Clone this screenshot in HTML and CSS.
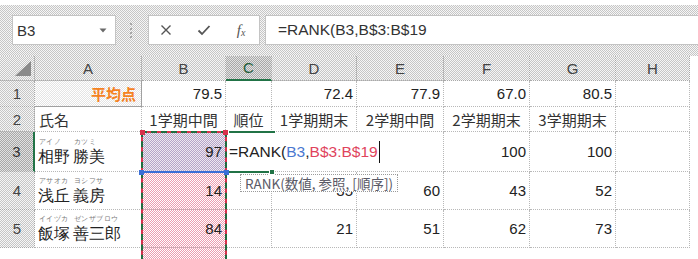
FILE: index.html
```html
<!DOCTYPE html>
<html lang="ja">
<head>
<meta charset="utf-8">
<title>RANK</title>
<link rel="stylesheet" href="styles.css">
</head>
<body>
<div class="toolbar">
  <div class="namebox"><span>B3</span><svg class="dd" width="8" height="5" viewBox="0 0 8 5"><path d="M0.5 0.5 L7.5 0.5 L4 4.5 Z" fill="#6a6a6a"/></svg></div>
  <div class="grip"></div>
  <div class="fxbtns">
    <span class="slot s1"><svg width="12" height="12" viewBox="0 0 12 12"><path d="M1.5 1.5 L10.5 10.5 M10.5 1.5 L1.5 10.5" stroke="#555" stroke-width="1.4" fill="none"/></svg></span>
    <span class="slot s2"><svg width="14" height="12" viewBox="0 0 14 12"><path d="M1.5 6.5 L5 10 L12.5 2" stroke="#555" stroke-width="1.8" fill="none"/></svg></span>
    <span class="slot s3"><span class="fx">f<sub>x</sub></span></span>
  </div>
  <div class="formula">=RANK(B3,B$3:B$19</div>
</div>

<div class="grid">
  <div class="hd corner"><svg width="18" height="16" viewBox="0 0 18 16"><path d="M17 0 L17 15 L1 15 Z" fill="#8a8a8a"/></svg></div>
  <div class="hd col">A</div>
  <div class="hd col">B</div>
  <div class="hd col sel-col">C</div>
  <div class="hd col">D</div>
  <div class="hd col">E</div>
  <div class="hd col">F</div>
  <div class="hd col">G</div>
  <div class="hd col">H</div>

  <div class="hd row">1</div>
  <div class="c num avg">平均点</div>
  <div class="c num">79.5</div>
  <div class="c"></div>
  <div class="c num">72.4</div>
  <div class="c num">77.9</div>
  <div class="c num">67.0</div>
  <div class="c num">80.5</div>
  <div class="c"></div>

  <div class="hd row">2</div>
  <div class="c jp">氏名</div>
  <div class="c jp ctr">1学期中間</div>
  <div class="c jp ctr">順位</div>
  <div class="c jp ctr">1学期期末</div>
  <div class="c jp ctr">2学期中間</div>
  <div class="c jp ctr">2学期期末</div>
  <div class="c jp ctr">3学期期末</div>
  <div class="c"></div>

  <div class="hd row sel-row">3</div>
  <div class="c name"><div class="part fam"><span class="kana">アイノ</span><span class="kanji">相野</span></div><div class="part"><span class="kana">カツミ</span><span class="kanji">勝美</span></div></div>
  <div class="c num b3">97</div>
  <div class="edit"><span class="ftxt">=RANK(<span class="ref-b">B3</span>,<span class="ref-r">B$3:B$19</span></span><span class="caret"></span><div class="tip">RANK(数値, 参照, [順序])</div></div>
  <div class="c num">100</div>
  <div class="c num">100</div>
  <div class="c"></div>

  <div class="hd row">4</div>
  <div class="c name"><div class="part fam"><span class="kana">アサオカ</span><span class="kanji">浅丘</span></div><div class="part"><span class="kana">ヨシフサ</span><span class="kanji">義房</span></div></div>
  <div class="c num pink b4">14</div>
  <div class="c"></div>
  <div class="c num">35</div>
  <div class="c num">60</div>
  <div class="c num">43</div>
  <div class="c num">52</div>
  <div class="c"></div>

  <div class="hd row">5</div>
  <div class="c name"><div class="part fam"><span class="kana">イイヅカ</span><span class="kanji">飯塚</span></div><div class="part"><span class="kana">ゼンザブロウ</span><span class="kanji">善三郎</span></div></div>
  <div class="c num pink b5">84</div>
  <div class="c"></div>
  <div class="c num">21</div>
  <div class="c num">51</div>
  <div class="c num">62</div>
  <div class="c num">73</div>
  <div class="c"></div>

  <div class="blank"></div>
  <div class="blank"></div>
  <div class="c pink tail"></div>
  <div class="blank"></div>
  <div class="blank"></div>
  <div class="blank"></div>
  <div class="blank"></div>
  <div class="blank"></div>
  <div class="blank"></div>

  <div class="range-frame"></div>
  <div class="b3-frame"></div>
  <div class="active-frame"></div>
</div>
</body>
</html>
```

FILE: styles.css
```css
body {
  margin: 0;
  width: 698px;
  height: 259px;
  overflow: hidden;
  background: #fff;
  font-family: "Noto Sans CJK JP", sans-serif;
  color: #222;
}

.toolbar {
  margin-top: 5px;
  height: 51px;
  box-sizing: border-box;
  padding-top: 10px;
  display: flex;
  align-items: flex-start;
  background: repeating-conic-gradient(#c6c6c6 0 25%, #f6f6f6 0 50%) 0 0 / 2px 2px;
}

.namebox {
  margin-left: 12px;
  width: 104px;
  height: 30px;
  box-sizing: border-box;
  background: #fff;
  border: 1px solid #c4c4c4;
  display: flex;
  align-items: center;
  justify-content: space-between;
  padding: 0 8px 0 4px;
  font: 15px "Liberation Sans", sans-serif;
  color: #333;
}

.grip {
  margin: 8px 16px 0 14px;
  width: 0;
  height: 15px;
  border-left: 2px dotted #a8a8a8;
}

.fxbtns {
  width: 112px;
  height: 30px;
  box-sizing: border-box;
  background: #fff;
  border: 1px solid #c4c4c4;
  display: flex;
  align-items: center;
}

.slot {
  display: flex;
  align-items: center;
  justify-content: center;
  height: 100%;
}
.s1 { width: 35px; }
.s2 { width: 40px; }
.s3 { width: 36px; }

.fx {
  font: italic 15px "Liberation Serif", serif;
  color: #555;
}
.fx sub {
  font-size: 10px;
  vertical-align: -1px;
}

.formula {
  margin-left: 5px;
  flex: 1;
  height: 30px;
  box-sizing: border-box;
  background: #fff;
  border: 1px solid #c4c4c4;
  border-right: none;
  display: flex;
  align-items: center;
  padding-left: 12px;
  font: 15.5px "Liberation Sans", sans-serif;
  color: #333;
}

.grid {
  width: 690px;
  display: grid;
  grid-template-columns: 35px 107px 84px 46px 85px 87px 86px 86px 74px;
  grid-template-rows: 25px 26px 25px 40px 38px 38px 11px;
}

.hd {
  box-sizing: border-box;
  background: repeating-conic-gradient(#c6c6c6 0 25%, #f6f6f6 0 50%) 0 0 / 2px 2px;
  border-right: 1px dotted #a8a8a8;
  border-bottom: 1px dotted #a8a8a8;
  display: flex;
  align-items: center;
  justify-content: center;
  font: 15px "Liberation Sans", sans-serif;
  color: #444;
}

.corner {
  align-items: flex-end;
  justify-content: flex-end;
  padding: 0 2px 3px 0;
}

.sel-col {
  background: repeating-conic-gradient(#a8a8a8 0 25%, #e2e2e2 0 50%) 0 0 / 2px 2px;
  border-bottom: 2px solid #217346;
  color: #1f5e3a;
}
.sel-row {
  background: repeating-conic-gradient(#a8a8a8 0 25%, #e2e2e2 0 50%) 0 0 / 2px 2px;
  border-right: 2px solid #217346;
  color: #333;
}

.c {
  box-sizing: border-box;
  border-right: 1px dotted #b8b8b8;
  border-bottom: 1px dotted #b8b8b8;
  display: flex;
  align-items: center;
  padding: 0 3px 0 4px;
  font: 15px "Liberation Sans", sans-serif;
  color: #222;
  white-space: nowrap;
}
.num { justify-content: flex-end; }
.jp { font: 15px "Noto Sans CJK JP", sans-serif; color: #333; }
.ctr { justify-content: center; padding: 0; }

.avg {
  font: bold 15px "Noto Sans CJK JP", sans-serif;
  color: #f5821f;
  padding-right: 5px;
  background: repeating-conic-gradient(#e4e4e4 0 25%, #fff 0 50%) 0 0 / 2px 2px;
  border-right: 1px solid #a0a0a0;
  border-bottom: 1px solid #a0a0a0;
}

.name {
  gap: 4px;
  padding-left: 3px;
}
.part {
  display: flex;
  flex-direction: column;
  align-items: flex-start;
}
.fam { width: 31px; }
.kana {
  font-size: 7px;
  line-height: 10px;
  color: #7a7a7a;
  padding-left: 1px;
  letter-spacing: 0.4px;
  white-space: nowrap;
}
.kanji {
  font-size: 15.5px;
  line-height: 19px;
  color: #222;
  white-space: nowrap;
}

.pink {
  background: repeating-conic-gradient(#ec9cb0 0 25%, #fff 0 50%) 0 0 / 2px 2px;
}
.b3 {
  grid-area: 4 / 3;
  background: repeating-conic-gradient(#b4a4c8 0 25%, #efe8f0 0 50%) 0 0 / 2px 2px;
}
.b4 { grid-area: 5 / 3; }
.b5 { grid-area: 6 / 3; }
.tail { grid-area: 7 / 3; border-bottom: none; }
.blank { background: #fff; }

.edit {
  grid-column: 4 / 7;
  grid-row: 4;
  position: relative;
  z-index: 2;
  background: #fff;
  box-sizing: border-box;
  border-right: 1px dotted #b8b8b8;
  border-bottom: 1px dotted #b8b8b8;
  display: flex;
  align-items: center;
  padding-left: 3px;
  font: 15.5px "Liberation Sans", sans-serif;
  color: #222;
  white-space: nowrap;
}
.ref-b { color: #4a78d0; }
.ref-r { color: #e0435c; }
.caret {
  width: 1px;
  height: 22px;
  background: #111;
  margin-left: 1px;
}

.tip {
  position: absolute;
  left: 14px;
  top: 42px;
  height: 18px;
  box-sizing: border-box;
  padding: 0 4px;
  background: #fff;
  border: 1px dotted #9a9a9a;
  display: flex;
  align-items: center;
  font: 13.5px "Noto Sans CJK JP", sans-serif;
  color: #5a5a66;
}

.range-frame {
  grid-area: 4 / 3 / 8 / 4;
  margin-bottom: -12px;
  z-index: 3;
  position: relative;
  box-sizing: border-box;
  border: 2px solid #d8304c;
  outline: 2px dashed #1e6b3e;
  outline-offset: -2px;
  margin-left: -1px;
  margin-right: -1px;
  margin-top: -1px;
  pointer-events: none;
}

.b3-frame {
  grid-area: 4 / 3;
  z-index: 4;
  position: relative;
  box-sizing: border-box;
  border-bottom: 2px solid #3b6fd6;
  margin: 0 -1px -1px -1px;
}
.b3-frame::before,
.b3-frame::after {
  content: "";
  position: absolute;
  width: 5px;
  height: 5px;
  bottom: -4px;
  background: #3b6fd6;
}
.b3-frame::before { left: -2px; }
.b3-frame::after { right: -2px; }

.range-frame::before,
.range-frame::after {
  content: "";
  position: absolute;
  width: 5px;
  height: 5px;
  top: -3px;
  background: #d8304c;
}
.range-frame::before { left: -3px; }
.range-frame::after { right: -3px; }

.active-frame {
  grid-area: 4 / 4;
  z-index: 3;
  position: relative;
  box-sizing: border-box;
  border-top: 2px solid #217346;
  border-bottom: 2px solid #217346;
  margin: -1px -3px -1px 3px;
}
.active-frame::after {
  content: "";
  position: absolute;
  right: 0;
  bottom: -4px;
  width: 6px;
  height: 6px;
  background: #217346;
  border: 1px solid #fff;
  box-sizing: border-box;
}
```
